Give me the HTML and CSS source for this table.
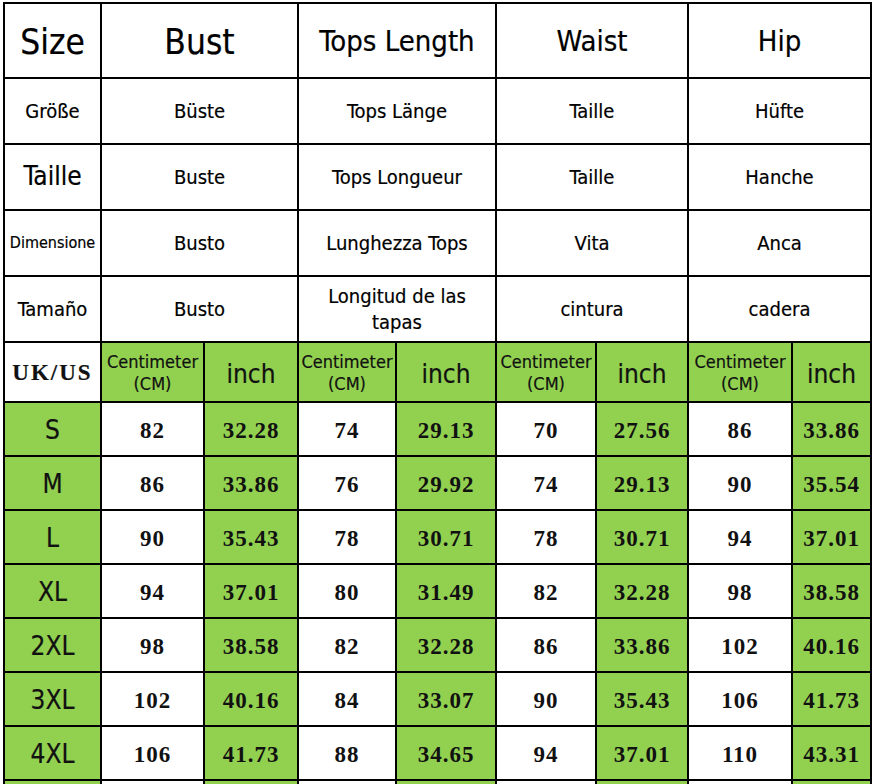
FILE: index.html
```html
<!DOCTYPE html>
<html lang="en">
<head>
<meta charset="utf-8">
<title>Size Chart</title>
<link rel="stylesheet" href="styles.css">
</head>
<body>
<div class="chart">
  <div class="c h1">Size</div>
  <div class="c h1 s2">Bust</div>
  <div class="c h1b s2">Tops Length</div>
  <div class="c h1b s2">Waist</div>
  <div class="c h1b s2">Hip</div>

  <div class="c t">Größe</div>
  <div class="c t s2">Büste</div>
  <div class="c t s2">Tops Länge</div>
  <div class="c t s2">Taille</div>
  <div class="c t s2">Hüfte</div>

  <div class="c t big">Taille</div>
  <div class="c t s2">Buste</div>
  <div class="c t s2">Tops Longueur</div>
  <div class="c t s2">Taille</div>
  <div class="c t s2">Hanche</div>

  <div class="c t small">Dimensione</div>
  <div class="c t s2">Busto</div>
  <div class="c t s2">Lunghezza Tops</div>
  <div class="c t s2">Vita</div>
  <div class="c t s2">Anca</div>

  <div class="c t">Tamaño</div>
  <div class="c t s2">Busto</div>
  <div class="c t s2 wrap">Longitud de las<br>tapas</div>
  <div class="c t s2">cintura</div>
  <div class="c t s2">cadera</div>

  <div class="c ukus">UK/US</div>
  <div class="c g cm">Centimeter<br>(CM)</div>
  <div class="c g inch">inch</div>
  <div class="c g cm">Centimeter<br>(CM)</div>
  <div class="c g inch">inch</div>
  <div class="c g cm">Centimeter<br>(CM)</div>
  <div class="c g inch">inch</div>
  <div class="c g cm">Centimeter<br>(CM)</div>
  <div class="c g inch">inch</div>

  <div class="c g sz">S</div><div class="c n">82</div><div class="c g n">32.28</div><div class="c n">74</div><div class="c g n">29.13</div><div class="c n">70</div><div class="c g n">27.56</div><div class="c n">86</div><div class="c g n">33.86</div>
  <div class="c g sz">M</div><div class="c n">86</div><div class="c g n">33.86</div><div class="c n">76</div><div class="c g n">29.92</div><div class="c n">74</div><div class="c g n">29.13</div><div class="c n">90</div><div class="c g n">35.54</div>
  <div class="c g sz">L</div><div class="c n">90</div><div class="c g n">35.43</div><div class="c n">78</div><div class="c g n">30.71</div><div class="c n">78</div><div class="c g n">30.71</div><div class="c n">94</div><div class="c g n">37.01</div>
  <div class="c g sz">XL</div><div class="c n">94</div><div class="c g n">37.01</div><div class="c n">80</div><div class="c g n">31.49</div><div class="c n">82</div><div class="c g n">32.28</div><div class="c n">98</div><div class="c g n">38.58</div>
  <div class="c g sz">2XL</div><div class="c n">98</div><div class="c g n">38.58</div><div class="c n">82</div><div class="c g n">32.28</div><div class="c n">86</div><div class="c g n">33.86</div><div class="c n">102</div><div class="c g n">40.16</div>
  <div class="c g sz">3XL</div><div class="c n">102</div><div class="c g n">40.16</div><div class="c n">84</div><div class="c g n">33.07</div><div class="c n">90</div><div class="c g n">35.43</div><div class="c n">106</div><div class="c g n">41.73</div>
  <div class="c g sz">4XL</div><div class="c n">106</div><div class="c g n">41.73</div><div class="c n">88</div><div class="c g n">34.65</div><div class="c n">94</div><div class="c g n">37.01</div><div class="c n">110</div><div class="c g n">43.31</div>
  <div class="c g"></div><div class="c"></div><div class="c g"></div><div class="c"></div><div class="c g"></div><div class="c"></div><div class="c g"></div><div class="c"></div><div class="c g"></div>
</div>
</body>
</html>
```

FILE: styles.css
```css
html, body {
  margin: 0;
  padding: 0;
  background: #ffffff;
}

body {
  padding: 2px 0 0 3px;
  overflow: hidden;
}

.chart {
  display: grid;
  grid-template-columns: 95px 101px 92px 96px 98px 98px 90px 102px 77px;
  grid-template-rows: 73px 64px 64px 64px 64px 58px repeat(8, 52px);
  gap: 2px;
  padding: 2px;
  background: #000000;
  width: max-content;
  font-family: "DejaVu Sans Condensed", "DejaVu Sans", sans-serif;
  color: #000000;
  -webkit-text-stroke: 0.2px currentColor;
}

.c {
  background: #ffffff;
  display: flex;
  align-items: center;
  justify-content: center;
  text-align: center;
  line-height: 1.2;
}

.s2 {
  grid-column: span 2;
}

.g {
  background: #92d050;
}

.h1 {
  font-size: 35px;
  padding-top: 2px;
}

.h1b {
  font-size: 29px;
  padding-top: 2px;
}

.t {
  font-size: 20px;
}

.t.big {
  font-size: 26px;
}

.t.small {
  font-size: 16px;
}

.wrap {
  line-height: 26px;
}

.ukus {
  font-family: "Liberation Serif", serif;
  font-weight: bold;
  font-size: 23px;
  letter-spacing: 2px;
  color: #111111;
  padding-top: 2px;
}

.cm {
  font-size: 18px;
  line-height: 22px;
  color: #111111;
  padding-top: 2px;
}

.inch {
  font-size: 26px;
  color: #111111;
  padding-top: 5px;
}

.sz {
  font-size: 26px;
  color: #111111;
  padding-top: 4px;
}

.n {
  font-family: "Liberation Serif", serif;
  font-weight: bold;
  font-size: 23px;
  letter-spacing: 1px;
  color: #111111;
  padding-top: 4px;
  -webkit-text-stroke: 0;
}
```
